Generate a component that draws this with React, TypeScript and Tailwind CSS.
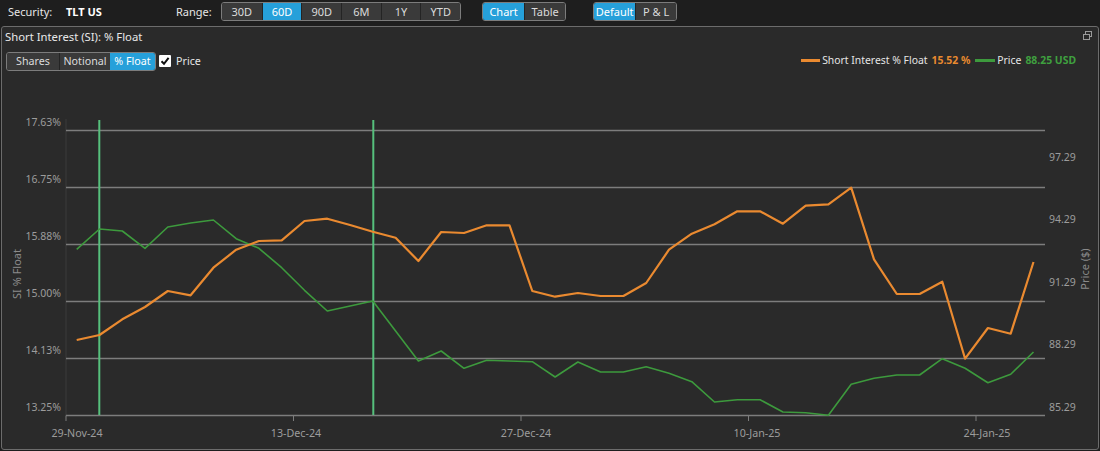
import React from "react"

const ranges = ["30D", "60D", "90D", "6M", "1Y", "YTD"]

const si = [
  339, 334, 318.3, 306, 290, 294.3, 266.7, 248.7, 240, 239.3, 220, 217.7, 224, 230.7, 236.7, 260, 231, 232, 224.3,
  224.3, 290, 295.7, 292, 295, 295, 282, 248.7, 232.7, 223.3, 210.3, 210.3, 222.7, 204.7, 203.3, 186.7, 258.3, 293,
  293, 280.7, 357.7, 327, 332.7, 261,
]

const price = [
  248.3, 228, 230, 247.3, 226, 222, 219, 237.7, 247.3, 266.7, 289.3, 310, 305, 300, 330, 360, 350, 367.3, 359.3, 360,
  360.7, 376, 361, 371, 371, 365.7, 372.3, 380.7, 401, 398.7, 398.7, 411, 411.7, 414.3, 383.3, 377.3, 374, 374, 357.7,
  367.3, 381.7, 373.3, 351,
]

const pts = (ys: number[]) => ys.map((y, i) => `${(76.7 + 22.78 * i).toFixed(1)},${y}`).join(" ")

const grid = [129.5, 186.5, 243.5, 300.5, 357.5]
const leftLabels = [
  { t: "17.63%", y: 121 },
  { t: "16.75%", y: 178 },
  { t: "15.88%", y: 235 },
  { t: "15.00%", y: 292 },
  { t: "14.13%", y: 349 },
  { t: "13.25%", y: 406 },
]
const rightLabels = [
  { t: "97.29", y: 156 },
  { t: "94.29", y: 218 },
  { t: "91.29", y: 281 },
  { t: "88.29", y: 343 },
  { t: "85.29", y: 406 },
]
const dates = [
  { t: "29-Nov-24", tick: 66, x: 77 },
  { t: "13-Dec-24", tick: 293.5, x: 296 },
  { t: "27-Dec-24", tick: 521, x: 526 },
  { t: "10-Jan-25", tick: 748.5, x: 757 },
  { t: "24-Jan-25", tick: 976, x: 987 },
]

function Segmented({ items, active, w }: { items: string[]; active: string; w: string }) {
  return (
    <div className="flex h-[19px] overflow-hidden rounded-[3px] border border-[#7c7c7c]">
      {items.map((item, i) => (
        <button
          key={item}
          className={
            "flex h-full items-center justify-center text-[11px] leading-none " +
            w +
            (i > 0 ? " border-l border-[#242424]" : "") +
            (item === active ? " bg-[#26a0da] text-white" : " bg-[#3a3a3a] text-[#dcdcdc]")
          }
        >
          {item}
        </button>
      ))}
    </div>
  )
}

function Chart() {
  return (
    <svg width="1096" height="378" className="block" style={{ fontFamily: "'Noto Sans', 'Open Sans', sans-serif" }}>
      <g transform="translate(-2,-71)">
        <line x1="66" y1="118" x2="66" y2="414.5" stroke="#3a3a3a" />
        {grid.map((y) => (
          <line key={y} x1="66" y1={y} x2="1045" y2={y} stroke="#7d7d7d" strokeWidth="1.3" />
        ))}
        <line x1="66" y1="414.5" x2="1045" y2="414.5" stroke="#7d7d7d" strokeWidth="1.3" />
        {dates.map((d) => (
          <g key={d.t}>
            <line x1={d.tick} y1="414.5" x2={d.tick} y2="420" stroke="#7d7d7d" />
            <text x={d.x} y="436" fontSize="10.7" fill="#9c9c9c" textAnchor="middle">
              {d.t}
            </text>
          </g>
        ))}
        {leftLabels.map((l) => (
          <text key={l.t} x="61" y={l.y + 4} fontSize="10.5" fill="#9c9c9c" textAnchor="end">
            {l.t}
          </text>
        ))}
        {rightLabels.map((l) => (
          <text key={l.t} x="1049" y={l.y + 4} fontSize="10.5" fill="#9c9c9c">
            {l.t}
          </text>
        ))}
        <text x="21" y="273" fontSize="11" fill="#8a8a8a" textAnchor="middle" transform="rotate(-90 21 273)">
          SI % Float
        </text>
        <text x="1089" y="268" fontSize="11" fill="#8a8a8a" textAnchor="middle" transform="rotate(-90 1089 268)">
          Price ($)
        </text>
        <line x1="99.3" y1="119" x2="99.3" y2="414" stroke="#56c07c" strokeWidth="2" />
        <line x1="373.3" y1="119" x2="373.3" y2="414" stroke="#56c07c" strokeWidth="2" />
        <polyline points={pts(price)} fill="none" stroke="#3d9a3d" strokeWidth="1.6" strokeLinejoin="round" />
        <polyline points={pts(si)} fill="none" stroke="#ea8a30" strokeWidth="2.2" strokeLinejoin="round" />
      </g>
    </svg>
  )
}

export default function App() {
  return (
    <div
      className="h-[451px] w-[1100px] overflow-hidden bg-[#1e1e1e] text-[#e6e6e6]"
      style={{ fontFamily: "'Noto Sans', 'Open Sans', sans-serif" }}
    >
      <div className="flex h-[26px] items-start pt-[2px] text-[11px]">
        <span className="ml-[8px] mt-[2px] w-[58px]">Security:</span>
        <span className="mt-[2px] w-[110px] font-bold text-white">TLT US</span>
        <span className="mt-[2px] w-[45px]">Range:</span>
        <Segmented items={ranges} active="60D" w="w-[39.7px]" />
        <div className="ml-[21px]">
          <Segmented items={["Chart", "Table"]} active="Chart" w="w-[41px]" />
        </div>
        <div className="ml-[27px]">
          <Segmented items={["Default", "P & L"]} active="Default" w="w-[41px]" />
        </div>
      </div>
      <div className="mx-[1px] h-[424px] overflow-hidden rounded-[3px] border border-[#6c6c6c] bg-[#2a2a2a]">
        <div className="flex h-[21px] items-center justify-between pl-[3px] pr-[6px]">
          <span className="text-[11.3px] text-[#e8e8e8]">Short Interest (SI): % Float</span>
          <svg width="9" height="9" viewBox="0 0 9 9" className="mb-[4px]">
            <rect x="2.5" y="0.5" width="6" height="5" fill="none" stroke="#9a9a9a" />
            <rect x="0.5" y="3.5" width="6" height="5" fill="#2a2a2a" stroke="#9a9a9a" />
          </svg>
        </div>
        <div className="flex h-[24px] items-center pl-[4px] pt-[2px]">
          <div className="flex h-[19px] overflow-hidden rounded-[3px] border border-[#7c7c7c] text-[10.7px]">
            <span className="flex w-[52px] items-center justify-center bg-[#3a3a3a] text-[#dcdcdc]">Shares</span>
            <span className="flex w-[51px] items-center justify-center border-l border-[#242424] bg-[#3a3a3a] text-[#dcdcdc]">
              Notional
            </span>
            <span className="flex w-[45px] items-center justify-center bg-[#26a0da] text-white">% Float</span>
          </div>
          <span className="ml-[3px] flex h-[12px] w-[12px] items-center justify-center rounded-[1px] bg-white">
            <svg width="10" height="10" viewBox="0 0 10 10">
              <path d="M1.5 5.2 L4 7.8 L8.6 1.8" fill="none" stroke="#111" strokeWidth="2" />
            </svg>
          </span>
          <span className="ml-[5px] text-[10.7px] text-[#e6e6e6]">Price</span>
          <div className="ml-auto mr-[22px] flex items-center text-[10.4px]">
            <span className="h-[3px] w-[19px] bg-[#ea8a30]" />
            <span className="ml-[2px] text-[#e6e6e6]">Short Interest % Float</span>
            <span className="ml-[4px] font-bold text-[#e8892f]">15.52 %</span>
            <span className="ml-[5px] h-[3px] w-[20px] bg-[#3d9a3d]" />
            <span className="ml-[2px] text-[#e6e6e6]">Price</span>
            <span className="ml-[4px] font-bold text-[#3fa03f]">88.25 USD</span>
          </div>
        </div>
        <Chart />
      </div>
    </div>
  )
}
